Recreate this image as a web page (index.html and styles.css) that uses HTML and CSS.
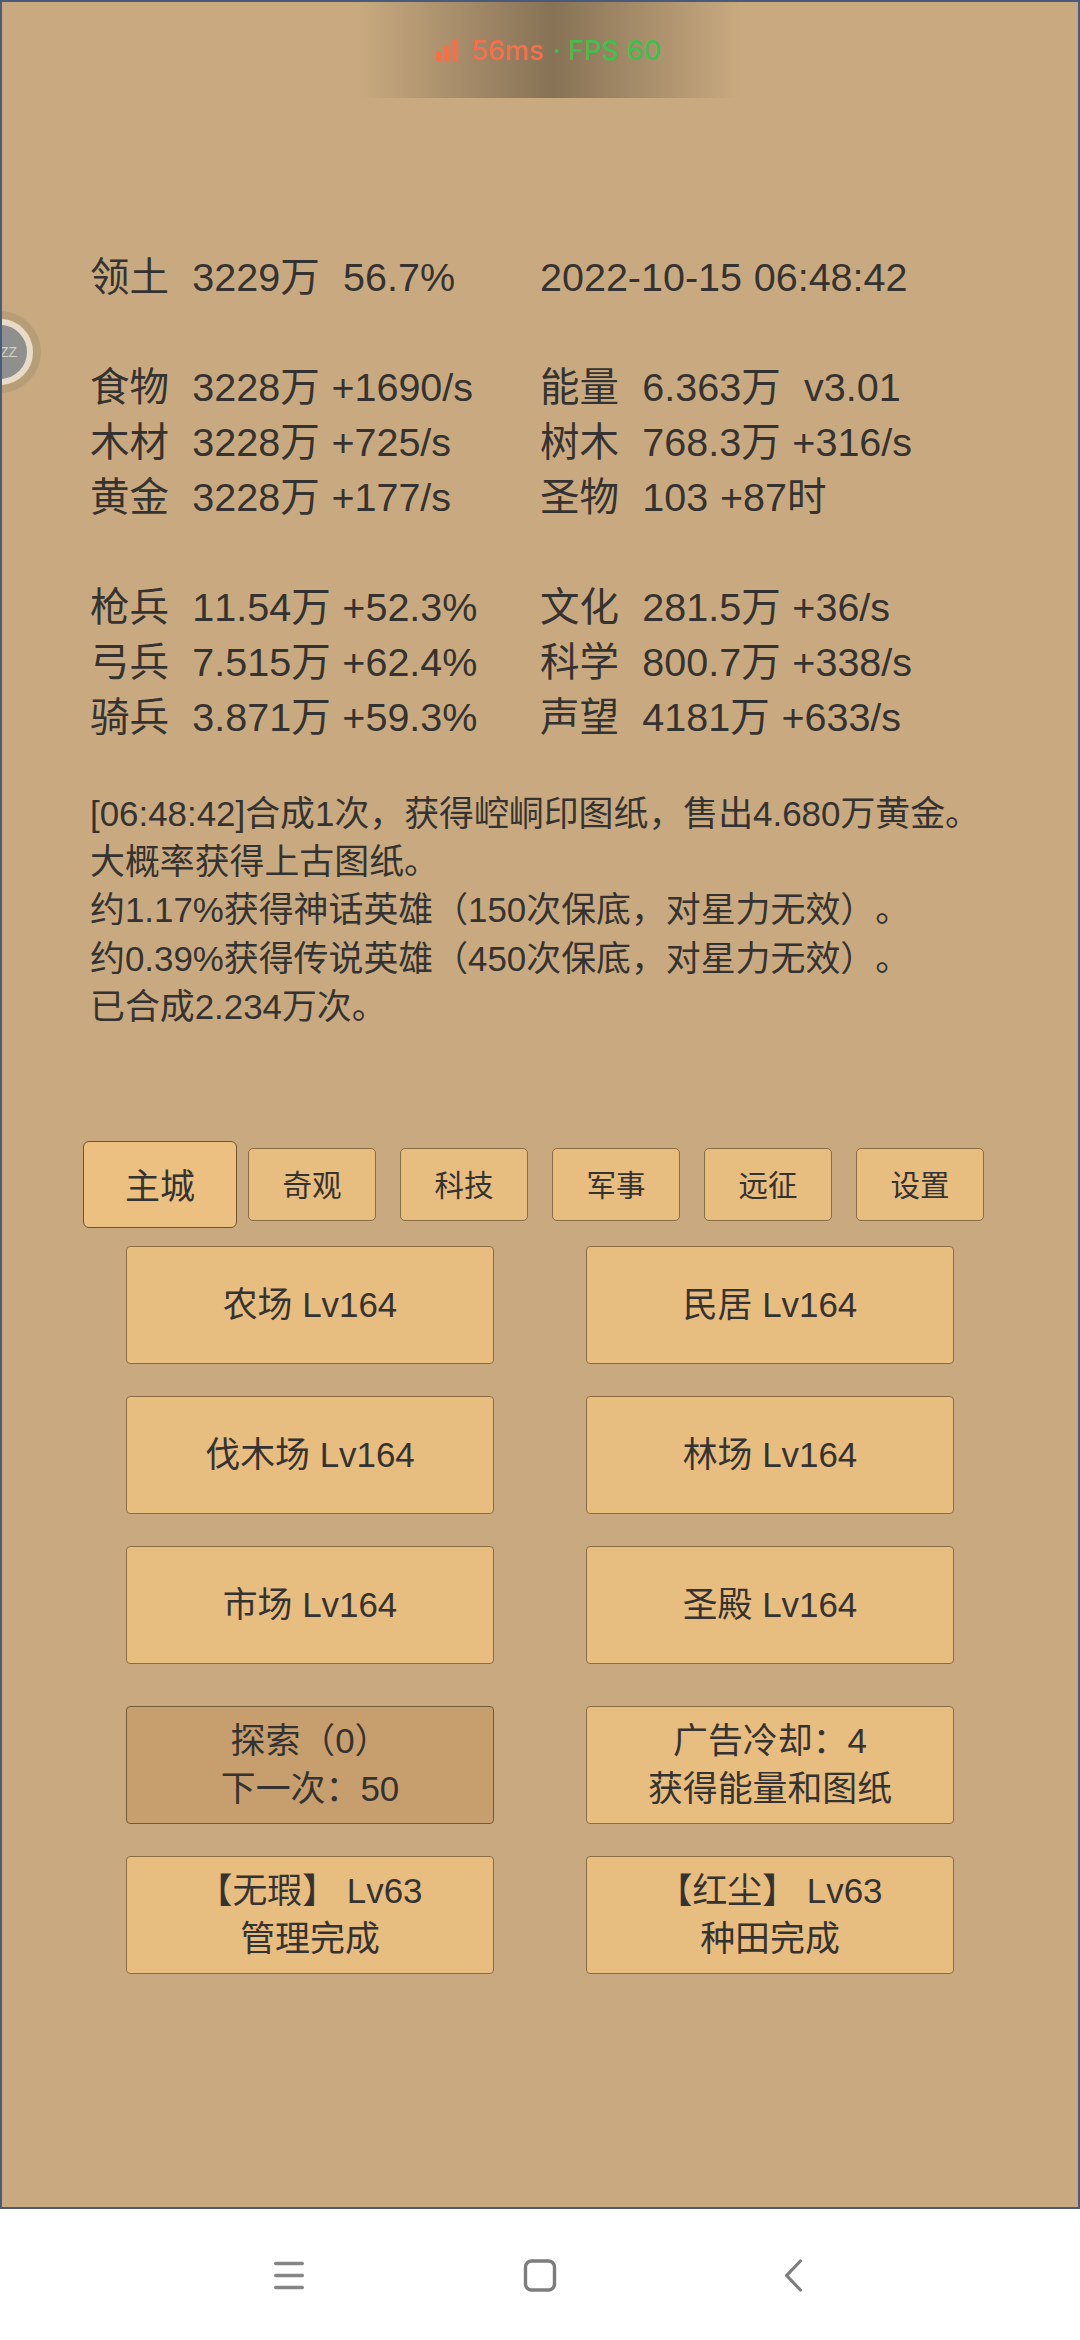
FILE: index.html
```html
<!DOCTYPE html>
<html>
<head lang="zh">
    <meta charset="UTF-8">
    <title>主城</title>
    <link rel="stylesheet" href="styles.css">
</head>
<body>
<div id="game">
    <div class="netInfo">
        <svg class="signal" viewBox="0 0 22 22" width="22" height="22">
            <rect x="0" y="12" width="5.5" height="10" rx="1" fill="#f5704a"/>
            <rect x="8" y="6" width="5.5" height="16" rx="1" fill="#f5704a"/>
            <rect x="16.5" y="0" width="5.5" height="22" rx="1" fill="#f5704a"/>
        </svg>
        <span class="ping">56ms</span>
        <span class="fps">· FPS 60</span>
    </div>
    <div class="floatBall"><span>ZZ</span></div>

    <div id="stats">
        <div class="col">
            <div class="line">领土  3229万  56.7%</div>
            <div class="line"> </div>
            <div class="line">食物  3228万 +1690/s</div>
            <div class="line">木材  3228万 +725/s</div>
            <div class="line">黄金  3228万 +177/s</div>
            <div class="line"> </div>
            <div class="line">枪兵  11.54万 +52.3%</div>
            <div class="line">弓兵  7.515万 +62.4%</div>
            <div class="line">骑兵  3.871万 +59.3%</div>
        </div>
        <div class="col">
            <div class="line">2022-10-15 06:48:42</div>
            <div class="line"> </div>
            <div class="line">能量  6.363万  v3.01</div>
            <div class="line">树木  768.3万 +316/s</div>
            <div class="line">圣物  103 +87时</div>
            <div class="line"> </div>
            <div class="line">文化  281.5万 +36/s</div>
            <div class="line">科学  800.7万 +338/s</div>
            <div class="line">声望  4181万 +633/s</div>
        </div>
    </div>

    <div id="log">
        <div>[06:48:42]合成1次，获得崆峒印图纸，售出4.680万黄金。</div>
        <div>大概率获得上古图纸。</div>
        <div>约1.17%获得神话英雄（150次保底，对星力无效）。</div>
        <div>约0.39%获得传说英雄（450次保底，对星力无效）。</div>
        <div>已合成2.234万次。</div>
    </div>

    <div id="tab">
        <button class="tabBtn on">主城</button>
        <button class="tabBtn">奇观</button>
        <button class="tabBtn">科技</button>
        <button class="tabBtn">军事</button>
        <button class="tabBtn">远征</button>
        <button class="tabBtn">设置</button>
    </div>

    <div class="btnGroup">
        <button class="btn">农场 Lv164</button>
        <button class="btn">民居 Lv164</button>
        <button class="btn">伐木场 Lv164</button>
        <button class="btn">林场 Lv164</button>
        <button class="btn">市场 Lv164</button>
        <button class="btn">圣殿 Lv164</button>
    </div>
    <div class="btnGroup second">
        <button class="btn dark">探索（0）<br>下一次：50</button>
        <button class="btn">广告冷却：4<br>获得能量和图纸</button>
        <button class="btn">【无瑕】 Lv63<br>管理完成</button>
        <button class="btn">【红尘】 Lv63<br>种田完成</button>
    </div>
</div>
<div id="navBar">
    <svg viewBox="0 0 40 40" width="40" height="40">
        <path d="M7.7 8.5H34.3M7.7 20.5H34.3M7.7 32.5H34.3" stroke="#858585" stroke-width="3.4" stroke-linecap="round" fill="none"/>
    </svg>
    <svg viewBox="0 0 40 40" width="40" height="40">
        <rect x="5.5" y="6" width="29" height="29" rx="6" stroke="#7d7d7d" stroke-width="3.4" fill="none"/>
    </svg>
    <svg viewBox="0 0 40 40" width="40" height="40">
        <path d="M28.4 6L14.6 20.5L28.4 35" stroke="#7d7d7d" stroke-width="3.2" stroke-linecap="round" stroke-linejoin="round" fill="none"/>
    </svg>
</div>
</body>
</html>
```

FILE: styles.css
```css
*{
    margin: 0;
    padding: 0;
    box-sizing: border-box;
}
body{
    width: 1080px;
    height: 2340px;
    overflow: hidden;
    background: #fff;
    font-family: "Liberation Sans", "Noto Sans CJK SC", sans-serif;
    color: #353331;
    text-spacing-trim: space-all;
    font-kerning: none;
}
#game{
    position: relative;
    height: 2209px;
    padding: 248px 0 0 88px;
    background: #c9aa80;
    border: 2px solid #4a5a78;
    overflow: hidden;
}
.netInfo{
    position: absolute;
    top: 0;
    left: 355px;
    width: 383px;
    height: 96px;
    display: flex;
    align-items: center;
    justify-content: center;
    gap: 9px;
    font-family: Inter, sans-serif;
    font-size: 27.2px;
    font-weight: 500;
    background: linear-gradient(90deg, rgba(0,0,0,0), rgba(0,0,0,.33) 51%, rgba(0,0,0,0));
}
.ping{
    margin-left: 4px;
    color: #f5704a;
}
.fps{
    color: #3fc04c;
}
.floatBall{
    position: absolute;
    top: 309px;
    left: -43px;
    width: 82px;
    height: 82px;
    padding: 8px;
    border-radius: 50%;
    background: #b89e76;
}
.floatBall span{
    display: block;
    width: 66px;
    height: 66px;
    padding-left: 27px;
    border: 6px solid #e8dcc8;
    border-radius: 50%;
    background: linear-gradient(90deg, #5c7fae, #8f8f8d 60%);
    color: #d5d0c6;
    font-size: 14px;
    line-height: 54px;
}
#stats{
    display: grid;
    grid-template-columns: 450px 1fr;
    font-size: 39.5px;
    line-height: 55px;
    word-spacing: .7px;
}
.line{
    height: 55px;
    white-space: pre;
}
#log{
    margin-top: 45px;
    font-size: 34.9px;
    line-height: 48.2px;
    white-space: nowrap;
}
#tab{
    display: flex;
    align-items: center;
    gap: 24px;
    margin: 110px 0 0 -7px;
}
.tabBtn{
    width: 128px;
    height: 73px;
    padding-bottom: 3px;
    font: inherit;
    font-size: 29.5px;
    color: inherit;
    background: #e8bd80;
    border: 1px solid #8a6c45;
    border-radius: 5px;
}
.tabBtn.on{
    width: 154px;
    height: 87px;
    margin-right: -13px;
    padding-bottom: 3px;
    font-size: 35px;
    background: #ebc080;
    border-color: #6e5232;
    border-radius: 6px;
}
.btnGroup{
    display: grid;
    grid-template-columns: 368px 368px;
    grid-auto-rows: 118px;
    gap: 32px 92px;
    margin: 18px 0 0 36px;
}
.btnGroup.second{
    margin-top: 42px;
}
.btn{
    font: inherit;
    font-size: 34.9px;
    line-height: 48px;
    color: inherit;
    background: #e8bd80;
    border: 1px solid #8a6c45;
    border-radius: 4px;
}
.btn.dark{
    background: #c79f6e;
    border-color: #735a39;
}
#navBar{
    height: 131px;
    display: flex;
    align-items: center;
    justify-content: center;
    gap: 212px;
    background: #fff;
}
```
